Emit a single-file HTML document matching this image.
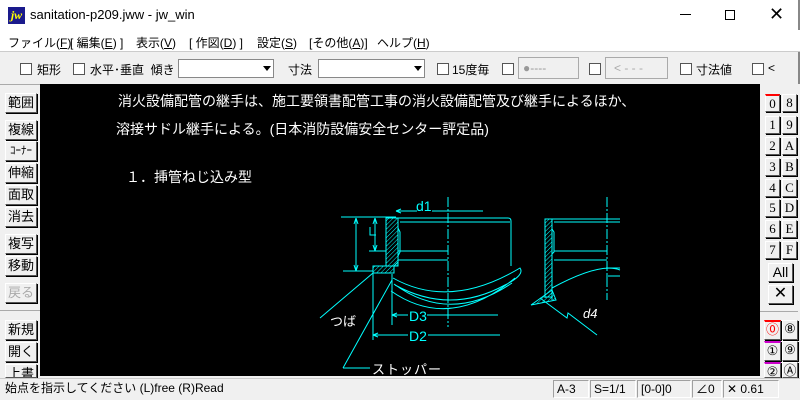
<!DOCTYPE html>
<html><head><meta charset="utf-8"><style>
*{box-sizing:border-box;margin:0;padding:0}
body{width:800px;height:400px;overflow:hidden;background:#f0f0f0;font-family:"Liberation Sans","Noto Sans CJK JP",sans-serif;font-size:12px;color:#000;position:relative}
.a{position:absolute}
#title{left:0;top:0;width:800px;height:30px;background:#fff}
#menu{left:0;top:30px;width:800px;height:22px;background:#fff;border-bottom:1px solid #ccc}
#menu span{position:absolute;top:4px;font-size:12px}
.cb{position:absolute;width:12px;height:12px;background:#fff;border:1px solid #555}
.btn{position:absolute;left:5px;width:32px;height:20px;background:#f0f0f0;border:1px solid;border-color:#fff #555 #555 #fff;box-shadow:1px 1px 0 #000;font-size:13px;text-align:center;line-height:18px}
.lb{position:absolute;width:15px;height:18px;background:#f0f0f0;border:1px solid;border-color:#fff #555 #555 #fff;box-shadow:1px 1px 0 #000;font-family:"Liberation Serif",serif;font-size:13px;text-align:center;line-height:16px}
#canvas{left:40px;top:84px;width:720px;height:292px;background:#000}
#status{left:0;top:378px;width:800px;height:22px;background:#f0f0f0;border-top:1px solid #ccc}
.sb{position:absolute;top:380px;height:18px;border:1px solid;border-color:#a0a0a0 #fff #fff #a0a0a0;font-size:12px;line-height:16px;padding-left:3px}
.t{position:absolute;color:#fff;font-size:14px;white-space:nowrap}
.tl{position:absolute;font-size:12px;top:61px}
</style></head><body>
<div id="title" class="a">
 <div class="a" style="left:8px;top:7px;width:17px;height:17px;background:#1a1a8c;color:#ff0;font:italic bold 12px 'Liberation Serif',serif;line-height:16px;text-align:center">jw</div>
 <div class="a" style="left:30px;top:7px;font-size:13px">sanitation-p209.jww - jw_win</div>
 <div class="a" style="left:680px;top:14px;width:11px;height:1px;background:#000"></div>
 <div class="a" style="left:725px;top:10px;width:10px;height:10px;border:1px solid #000"></div>
 <div class="a" style="left:769px;top:4px;font-size:18px">✕</div>
 <div class="a" style="left:798px;top:0;width:2px;height:400px;background:#888"></div>
</div>
<div id="menu" class="a">
 <span style="left:8px">ファイル(<u>F</u>)</span><span style="left:70px">[ 編集(<u>E</u>) ]</span><span style="left:136px">表示(<u>V</u>)</span><span style="left:189px">[ 作図(<u>D</u>) ]</span><span style="left:257px">設定(<u>S</u>)</span><span style="left:309px">[その他(<u>A</u>)]</span><span style="left:377px">ヘルプ(<u>H</u>)</span>
</div>
<div class="cb" style="left:20px;top:63px"></div><div class="tl" style="left:37px">矩形</div>
<div class="cb" style="left:73px;top:63px"></div><div class="tl" style="left:90px">水平･垂直&nbsp; 傾き</div>
<div class="a" style="left:178px;top:59px;width:96px;height:19px;background:#fff;border:1px solid #888"><div class="a" style="right:2px;top:6px;border:4px solid transparent;border-top:5px solid #000"></div></div>
<div class="tl" style="left:288px">寸法</div>
<div class="a" style="left:318px;top:59px;width:107px;height:19px;background:#fff;border:1px solid #888"><div class="a" style="right:2px;top:6px;border:4px solid transparent;border-top:5px solid #000"></div></div>
<div class="cb" style="left:437px;top:63px"></div><div class="tl" style="left:452px">15度毎</div>
<div class="cb" style="left:502px;top:63px"></div>
<div class="a" style="left:518px;top:57px;width:61px;height:22px;border:1px solid #aaa;background:#f0f0f0;color:#999;font-size:12px;line-height:20px;padding-left:4px">●‑‑‑‑</div>
<div class="cb" style="left:589px;top:63px"></div>
<div class="a" style="left:605px;top:57px;width:63px;height:22px;border:1px solid #aaa;color:#aaa;line-height:20px;padding-left:8px">&lt; - - -</div>
<div class="cb" style="left:680px;top:63px"></div><div class="tl" style="left:696px">寸法値</div>
<div class="cb" style="left:752px;top:63px"></div><div class="tl" style="left:768px">&lt;</div>
<div class="a" style="left:0;top:84px;width:800px;height:1px;background:#aaa"></div>

<div class="btn" style="top:93px">範囲</div>
<div class="btn" style="top:120px">複線</div>
<div class="btn" style="top:141px;font-size:11px">ｺｰﾅｰ</div>
<div class="btn" style="top:163px">伸縮</div>
<div class="btn" style="top:185px">面取</div>
<div class="btn" style="top:207px">消去</div>
<div class="btn" style="top:234px">複写</div>
<div class="btn" style="top:256px">移動</div>
<div class="btn" style="top:283px;color:#aaa">戻る</div>
<div class="a" style="left:0;top:310px;width:40px;height:1px;background:#aaa"></div>
<div class="btn" style="top:320px">新規</div>
<div class="btn" style="top:342px">開く</div>
<div class="btn" style="top:364px;height:14px;overflow:hidden">上書</div>

<div id="canvas" class="a">
<svg width="720" height="292" viewBox="40 84 720 292" style="position:absolute;left:0;top:0" fill="none" stroke="#0ff" stroke-width="1">
<defs><pattern id="h" width="3" height="3" patternUnits="userSpaceOnUse" patternTransform="rotate(45)"><line x1="0" y1="0" x2="0" y2="3" stroke="#0ff"/></pattern></defs>
<line x1="448" y1="197" x2="448" y2="327" stroke-dasharray="10 2 2 2"/>
<line x1="607" y1="197" x2="607" y2="300" stroke-dasharray="10 2 2 2"/>
<path d="M396 211 H417 M432 211 H483 M396 211 l5 -2 M396 211 l5 2"/>
<path d="M341 217 H396 M398 218 H508 q3 0 3 3 V266 M400 222 H510 M398 251 H448 M398 260 H448"/>
<rect x="386" y="218" width="12" height="48" fill="url(#h)"/>
<path d="M386 218 V266 M398 218 v10 l2 4 v20 l-2 4 v6 l-4 4 V270"/>
<rect x="373" y="266" width="21" height="7" fill="url(#h)"/>
<path d="M373 266 H393 M373 266 V273 H393"/>
<path d="M393 278 Q450 310 520 268 Q525 275 505 285 Q450 315 395 285 M394 284 Q450 325 512 283 M391 291 Q450 332 515 278"/>
<path d="M356 218 V271 M343 271 H373 M356 218 l-2 6 M356 218 l2 6 M356 271 l-2 -6 M356 271 l2 -6"/>
<path d="M375 218 V251 M369 251 H386 M375 218 l-2 6 M375 218 l2 6 M375 251 l-2 -6 M375 251 l2 -6 M370 227 v8 h6"/>
<path d="M392 274 V325 M392 315 H408 M427 315 H498 M392 315 l5 -2 M392 315 l5 2"/>
<path d="M373 270 V340 M373 335 H408 M428 335 H500 M373 335 l5 -2 M373 335 l5 2"/>
<path d="M320 318 L373 273 M343 368 L392 280 M343 368 H370"/>
<rect x="545" y="219" width="7" height="78" fill="url(#h)"/>
<path d="M545 219 V298 M552 219 H620 M554 222 H620 M552 219 v10 l2 3 v20 l-2 2 V300 M554 251 H607 M554 260 H607 M606 268 H620 M606 276 H620"/>
<path d="M552 288 Q600 262 620 270"/>
<path d="M531 305 L552 290 L556 300 Z" fill="url(#h)"/>
<path d="M540 298 L567 318 L568 313 L597 335"/>
</svg>
<div class="t" style="left:78px;top:7px">消火設備配管の継手は、施工要領書配管工事の消火設備配管及び継手によるほか、</div>
<div class="t" style="left:76px;top:35px">溶接サドル継手による。(日本消防設備安全センター評定品)</div>
<div class="t" style="left:86px;top:83px">１．挿管ねじ込み型</div>
<div class="t" style="left:376px;top:114px;color:#0ff">d1</div>
<div class="t" style="left:369px;top:224px;color:#0ff">D3</div>
<div class="t" style="left:369px;top:244px;color:#0ff">D2</div>
<div class="t" style="left:290px;top:227px;font-size:13px">つば</div>
<div class="t" style="left:332px;top:275px;font-size:13px;letter-spacing:1px">ストッパー</div>
<div class="t" style="left:543px;top:222px;font-size:13px;font-style:italic">d4</div>
</div>

<div class="a" style="left:760px;top:84px;width:40px;height:294px;background:#f0f0f0"></div>
<div class="lb" style="left:765px;top:94px;border-top:2px solid red">0</div><div class="lb" style="left:782px;top:94px">8</div>
<div class="lb" style="left:765px;top:116px">1</div><div class="lb" style="left:782px;top:116px">9</div>
<div class="lb" style="left:765px;top:137px">2</div><div class="lb" style="left:782px;top:137px">A</div>
<div class="lb" style="left:765px;top:158px">3</div><div class="lb" style="left:782px;top:158px">B</div>
<div class="lb" style="left:765px;top:179px">4</div><div class="lb" style="left:782px;top:179px">C</div>
<div class="lb" style="left:765px;top:199px">5</div><div class="lb" style="left:782px;top:199px">D</div>
<div class="lb" style="left:765px;top:220px">6</div><div class="lb" style="left:782px;top:220px">E</div>
<div class="lb" style="left:765px;top:241px">7</div><div class="lb" style="left:782px;top:241px">F</div>
<div class="lb" style="left:768px;top:263px;width:25px;height:19px;font-family:'Liberation Sans',sans-serif;font-size:14px">All</div>
<div class="lb" style="left:768px;top:285px;width:25px;height:19px;font-family:'Liberation Sans',sans-serif;font-size:16px">✕</div>
<div class="a" style="left:760px;top:311px;width:38px;height:1px;background:#aaa"></div>
<div class="lb" style="left:764px;top:320px;width:17px;height:20px;color:red;border-top:2px solid red">⓪</div><div class="lb" style="left:782px;top:320px;width:16px;height:20px">⑧</div>
<div class="lb" style="left:764px;top:341px;width:17px;height:20px;border-top:2px solid #c0c">①</div><div class="lb" style="left:782px;top:341px;width:16px;height:20px">⑨</div>
<div class="lb" style="left:764px;top:362px;width:17px;height:16px;border-top:2px solid #c0c;overflow:hidden">②</div><div class="lb" style="left:782px;top:362px;width:16px;height:16px;overflow:hidden">Ⓐ</div>

<div id="status" class="a"></div>
<div class="sb" style="left:2px;width:550px;border:none">始点を指示してください (L)free (R)Read</div>
<div class="sb" style="left:553px;width:36px">A-3</div>
<div class="sb" style="left:590px;width:46px">S=1/1</div>
<div class="sb" style="left:637px;width:54px">[0-0]0</div>
<div class="sb" style="left:692px;width:30px">∠0</div>
<div class="sb" style="left:723px;width:56px">✕ 0.61</div>
</body></html>
